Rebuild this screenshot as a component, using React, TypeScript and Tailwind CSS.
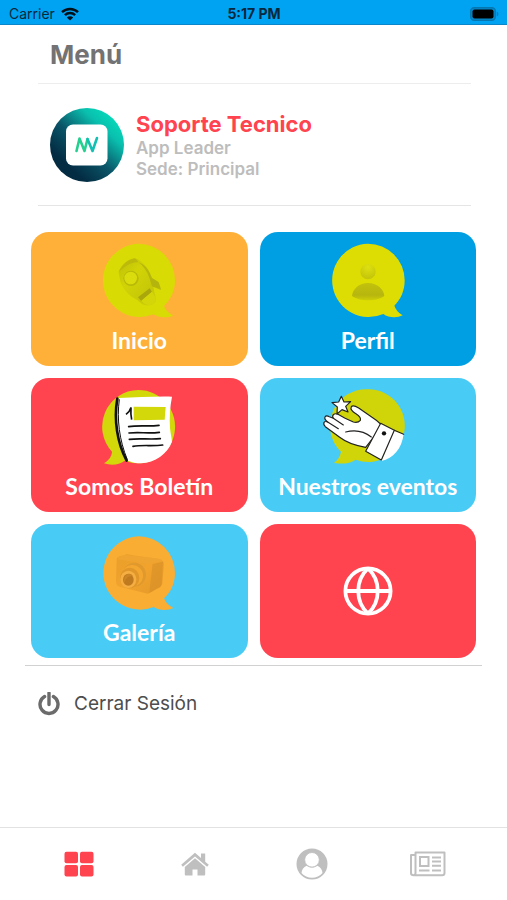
import type { ReactNode } from 'react'

const RocketArt = () => (
  <svg viewBox="15 22 300 234" className="w-25" aria-hidden="true">
    <defs>
      <linearGradient id="rocket" x1="0" y1="0" x2="1" y2="1">
        <stop offset="0" stopColor="#bcbe09" />
        <stop offset="0.35" stopColor="#d2d306" />
        <stop offset="0.7" stopColor="#c6c808" />
        <stop offset="1" stopColor="#d3d405" />
      </linearGradient>
    </defs>
    <path d="M163 27a110 110 0 0 1 110 110c0 32-13 58-33 77 4 12 14 21 27 29-18 8-44 6-59-4a110 110 0 1 1-45-212z" fill="#d9db05" />
    <path d="M104 112c8-22 26-38 48-41 20 6 34 20 43 40l9 19 19 11 9 23-24-8 3 16c5 15 7 27 1 33-9 9-26 9-37 4l-14-12c-28-14-50-38-54-66z" fill="url(#rocket)" />
    <path d="M104 113c10-22 27-38 49-42 4 4 8 7 10 12-18-2-40 10-59 30z" fill="#bdb90b" />
    <path d="M163 83c14 10 26 26 33 46l8 26 27 11-7-23-20-13c-9-25-21-41-41-47z" fill="#a7a711" opacity=".6" />
    <path d="M162 188l35-27 7 10-32 28z" fill="#aaa70d" />
    <path d="M172 198l32-27 10 17c2 13-3 20-15 23-11 1-20-4-27-13z" fill="#d5d609" />
    <circle cx="141" cy="131" r="23" fill="#b8ba09" />
    <circle cx="140" cy="130" r="19" fill="#dbdc0d" />
  </svg>
)

const ProfileArt = () => (
  <svg viewBox="9 22 300 234" className="w-25" aria-hidden="true">
    <defs>
      <linearGradient id="bust" x1="0" y1="0" x2="0" y2="1">
        <stop offset="0" stopColor="#c2c10c" />
        <stop offset="0.7" stopColor="#b7b60f" />
        <stop offset="1" stopColor="#cdcd08" />
      </linearGradient>
      <radialGradient id="head" cx=".5" cy=".2" r=".8">
        <stop offset="0" stopColor="#dfe010" />
        <stop offset="1" stopColor="#c3c30a" />
      </radialGradient>
    </defs>
    <path d="M159 27a110 110 0 0 1 110 110c0 32-12 58-31 76 4 12 13 22 25 29-17 9-43 7-58-4a110 110 0 1 1-46-211z" fill="#dddd03" />
    <circle cx="159" cy="111" r="23" fill="url(#head)" />
    <path d="M111 184c2-22 22-39 48-39s47 17 49 39c-20 17-77 17-97 0z" fill="url(#bust)" />
  </svg>
)

const NewsletterArt = () => (
  <svg viewBox="15 24 300 234" className="w-25" aria-hidden="true">
    <path d="M163 30a110 110 0 1 1-41 212c-16 13-41 15-62 8 13-8 23-20 24-35a110 110 0 0 1 79-185z" fill="#d2d80a" />
    <path d="M104 54c54-2 106-5 160-4-6 31-8 62-6 94 2 18 5 31 6 41-14 37-51 63-93 65-14 0-28-3-39-8-32-54-43-120-28-188z" fill="#fff" />
    <path d="M100 56c-11 64 0 134 28 186" fill="none" stroke="#111" strokeWidth="8" strokeLinecap="round" />
    <path d="M106 58c-8 59 0 123 24 181" fill="none" stroke="#111" strokeWidth="3" />
    <path d="M149 80l96 1-3 38-93 2z" fill="#d2d80a" />
    <path d="M126 103c8-6 13-13 15-21-1 14-1 25 2 37" fill="none" stroke="#111" strokeWidth="5" />
    <path d="M134 140c28-5 59 0 91-4M135 159c30-3 60 2 91-2M136 178c29-4 61 1 93-2M147 199c28-5 58 0 89-4" fill="none" stroke="#111" strokeWidth="5" strokeLinecap="round" />
  </svg>
)

const HandArt = () => (
  <svg viewBox="24 24 300 234" className="w-25" aria-hidden="true">
    <path d="M177 28a109 109 0 1 1-40 211c-19 13-43 14-65 9 10-6 18-17 21-33A109 109 0 0 1 177 28z" fill="#cfd508" />
    <path d="M252 153l29 9c-6 45-31 73-67 81z" fill="#fff" />
    <g fill="#fff" stroke="#222" strokeWidth="3.500" strokeLinejoin="round" strokeLinecap="round">
      <path d="M167 202c-31-5-56-13-78-30L46 140c-9-9-4-19 7-14-16-13-7-22 5-16l12 5c-6-10 3-17 14-12l20 11c10 5 18 8 26 12 9 2 17 0 21-5 3-9-6-15-12-19-12-6-19-15-15-22 5-6 14-1 22 4l40 28c14 9 19 14 28 22l-5 14z" />
      <path d="M212 130l41 21-39 89-47-26z" />
      <path d="M94 49l8 17 20-1-15 14 7 17-18-7-15 13 1-21-16-13 20-2z" />
      <path d="M53 126l32 20M70 115l30 20M107 156c31-8 53-4 77 15M253 151l28 12" fill="none" />
    </g>
    <circle cx="222" cy="160" r="6.500" fill="#111" />
  </svg>
)

const CameraArt = () => (
  <svg viewBox="15 15 300 234" className="w-25" aria-hidden="true">
    <defs>
      <linearGradient id="camera" x1="0" y1="0" x2="1" y2="1">
        <stop offset="0" stopColor="#e99f2a" />
        <stop offset="0.5" stopColor="#f1a32d" />
        <stop offset="1" stopColor="#e39828" />
      </linearGradient>
    </defs>
    <path d="M163 22a110 110 0 0 1 110 110c0 32-13 58-33 76 4 12 14 22 28 29-18 9-44 7-59-3a110 110 0 1 1-46-212z" fill="#faad33" />
    <path d="M98 90c1-7 8-9 18-10l12-5 18 4 77 10c12 3 16 7 17 15l-5 58c-1 9-6 13-15 17l-28 15-83-20c-9-2-13-8-13-18z" fill="url(#camera)" />
    <path d="M100 91l92 14 43-9c-8-6-15-8-34-10l-78-8c-13 1-20 5-23 13z" fill="#efa432" />
    <path d="M206 105l31-7-4 63c-1 9-5 13-13 17l-24 14z" fill="#d38c25" opacity=".5" />
    <ellipse cx="151" cy="137" rx="35" ry="36" fill="#e0992c" />
    <ellipse cx="145" cy="140" rx="32" ry="32" fill="#f3a630" />
    <ellipse cx="137" cy="147" rx="29" ry="31" fill="#e09629" />
    <ellipse cx="133" cy="151" rx="24" ry="26" fill="#f5ae42" />
    <ellipse cx="133" cy="152" rx="16" ry="18" fill="#bf791e" />
    <path d="M122 161c2-12 11-21 24-20-4-9-16-8-22 0-5 7-5 14-2 20z" fill="#cc8525" />
  </svg>
)

const GlobeIcon = () => (
  <svg viewBox="0 0 50 50" className="size-[50px]" fill="none" stroke="white" strokeWidth="3.800" aria-hidden="true">
    <circle cx="25" cy="25" r="22.600" />
    <path d="M25 2.400c-13 12-13 33 0 45.200M25 2.400c13 12 13 33 0 45.200M2.400 25h45.200" />
  </svg>
)

const tiles: { label: string; color: string; art: ReactNode }[] = [
  { label: 'Inicio', color: 'bg-[#ffb038]', art: <RocketArt /> },
  { label: 'Perfil', color: 'bg-[#009fe3]', art: <ProfileArt /> },
  { label: 'Somos Boletín', color: 'bg-[#ff434f]', art: <NewsletterArt /> },
  { label: 'Nuestros eventos', color: 'bg-[#48cbf5]', art: <HandArt /> },
  { label: 'Galería', color: 'bg-[#48cbf5]', art: <CameraArt /> },
]

function StatusBar() {
  return (
    <header className="grid h-[25px] grid-cols-3 items-center border-b border-[#0b87c9] bg-[#00a2f2] pt-1 pr-2 pl-[9px] text-sm text-[#06283c]">
      <div className="flex items-center gap-1.5">
        <span>Carrier</span>
        <svg viewBox="0 0 18 14" className="h-3.5 w-[18px]" aria-hidden="true">
          <path d="M1 5.200a11.500 11.500 0 0 1 16 0M3.900 8.200a7.300 7.300 0 0 1 10.200 0" fill="none" stroke="#001018" strokeWidth="2.500" />
          <path d="M9 13.600 5.800 10.500a4.500 4.500 0 0 1 6.400 0z" fill="#001018" />
        </svg>
      </div>
      <span className="text-center font-bold">5:17 PM</span>
      <svg viewBox="0 0 29 14" className="h-3.5 w-[29px] justify-self-end" aria-hidden="true">
        <rect x=".7" y=".7" width="24.600" height="12.600" rx="3.500" fill="#008bd0" stroke="#0577b0" strokeWidth="1.400" />
        <rect x="2.500" y="2.500" width="21" height="9" rx="2" fill="#000" />
        <path d="M26.800 4.500c2 .8 2 4.200 0 5z" fill="#0577b0" />
      </svg>
    </header>
  )
}

function Avatar() {
  return (
    <svg viewBox="0 0 74 74" className="size-[74px] shrink-0" aria-hidden="true">
      <defs>
        <linearGradient id="avatar" x1=".85" y1=".15" x2=".25" y2=".8">
          <stop offset="0" stopColor="#06d6b8" />
          <stop offset="0.2" stopColor="#09bfae" />
          <stop offset="0.6" stopColor="#0a5568" />
          <stop offset="1" stopColor="#032b42" />
        </linearGradient>
      </defs>
      <circle cx="37" cy="37" r="37" fill="url(#avatar)" />
      <rect x="16" y="16.500" width="41.500" height="41" rx="7" fill="white" />
      <g fill="none" strokeWidth="2.600" strokeLinecap="round" strokeLinejoin="round">
        <path d="M26.500 43 29.500 30.500 34.500 43 37.500 31" stroke="#25cf8f" />
        <path d="M37.500 31 42.500 43 47 30" stroke="#12bfb4" />
      </g>
    </svg>
  )
}

function TabBar() {
  return (
    <nav className="grid h-[73px] grid-cols-4 border-t border-[#e2e2e2] px-[21px] text-[#bfbfbf]">
      <a href="#menu" aria-label="Menú" className="grid place-items-center">
        <svg viewBox="0 0 30 26" className="h-[26px] w-[30px]" fill="#ff434f" aria-hidden="true">
          <rect x=".5" y=".8" width="13.500" height="11.500" rx="2" />
          <rect x="16" y=".8" width="13.500" height="11.500" rx="2" />
          <rect x=".5" y="14" width="13.500" height="11.500" rx="2" />
          <rect x="16" y="14" width="13.500" height="11.500" rx="2" />
        </svg>
      </a>
      <a href="#inicio" aria-label="Inicio" className="grid place-items-center">
        <svg viewBox="0 0 28 24" className="h-6 w-7" fill="currentColor" aria-hidden="true">
          <path d="M14 .8 20 6V1.500h4.200v8.200l3.600 3.100-1.700 2L14 4.500 1.900 14.800.2 12.800 12.500 1.900c.6-.6 1-.9 1.500-1.100z" />
          <path d="m14 6.300 10.200 8.700v7.200c0 .8-.5 1.300-1.300 1.300h-6.400V17.500h-5v6H5.100c-.8 0-1.300-.5-1.300-1.300V15z" />
        </svg>
      </a>
      <a href="#perfil" aria-label="Perfil" className="grid place-items-center">
        <svg viewBox="0 0 32 32" className="size-8" aria-hidden="true">
          <circle cx="16" cy="16" r="15.500" fill="currentColor" />
          <path d="M16 19.500c2.200 0 4-.7 5.300-1.800 3.300 1.300 5 4 5.200 7.300a13.800 13.800 0 0 1-21 0c.2-3.300 1.900-6 5.200-7.300 1.300 1.100 3.100 1.800 5.300 1.800z" fill="white" />
          <circle cx="16" cy="11.800" r="7.300" fill="white" stroke="currentColor" strokeWidth=".8" />
        </svg>
      </a>
      <a href="#boletin" aria-label="Boletín" className="grid place-items-center">
        <svg viewBox="0 0 36 26" className="h-[26px] w-9" fill="none" stroke="currentColor" strokeWidth="2" aria-hidden="true">
          <path d="M5.500 22V1.500h29v20.500c0 1.500-.8 2.300-2.300 2.300H3.800C2 24.300 1 23.500 1 22V4h4.500M5.500 22c0 1.500-.7 2.300-2 2.300" strokeLinejoin="round" />
          <path d="M10 6h8.500v9H10zM22 6.500H31M22 10.500H31M22 14.800H31M9 19.500h10.500M22 19.500H31" />
        </svg>
      </a>
    </nav>
  )
}

export default function App() {
  return (
    <div className="flex min-h-screen flex-col bg-white font-['Inter',sans-serif]">
      <StatusBar />

      <main className="flex-1">
        <div className="mr-9 ml-[38px]">
          <h1 className="h-[59px] border-b border-[#ededed] pt-3 pl-3 text-[26px] leading-9 font-bold text-[#737373]">Menú</h1>
          <section className="flex h-[122px] items-center gap-3 border-b border-[#e5e5e5] pl-3">
            <Avatar />
            <div className="text-[17px] leading-[21px] font-semibold text-[#bdbdbd]">
              <h2 className="text-[22px] leading-7 font-bold text-[#ff434f]">Soporte Tecnico</h2>
              <p>App Leader</p>
              <p>Sede: Principal</p>
            </div>
          </section>
        </div>

        <div className="mx-[25px] border-b border-[#d3d0d0] px-1.5 pt-[26px] pb-[7px]">
          <div className="grid grid-cols-2 gap-3">
            {tiles.map(({ label, color, art }) => (
              <button key={label} className={`flex h-[134px] flex-col items-center rounded-[18px] pt-2.5 ${color}`}>
                {art}
                <span className="mt-1.5 font-['Lato',sans-serif] text-[23px] leading-7 font-bold text-white">{label}</span>
              </button>
            ))}
            <button aria-label="Sitio web" className="grid h-[134px] place-items-center rounded-[18px] bg-[#ff434f]">
              <GlobeIcon />
            </button>
          </div>
        </div>

        <button className="mt-5 ml-[38px] flex h-9 items-center gap-3.5 text-[19px] text-[#4d4d4d]">
          <svg viewBox="0 0 22 24" className="h-6 w-[22px]" fill="none" stroke="#6b6b6b" strokeWidth="3.400" aria-hidden="true">
            <path d="M6.600 4.600a9 9 0 1 0 8.800 0M11 1v11.500" strokeLinecap="round" />
          </svg>
          Cerrar Sesión
        </button>
      </main>

      <TabBar />
    </div>
  )
}
